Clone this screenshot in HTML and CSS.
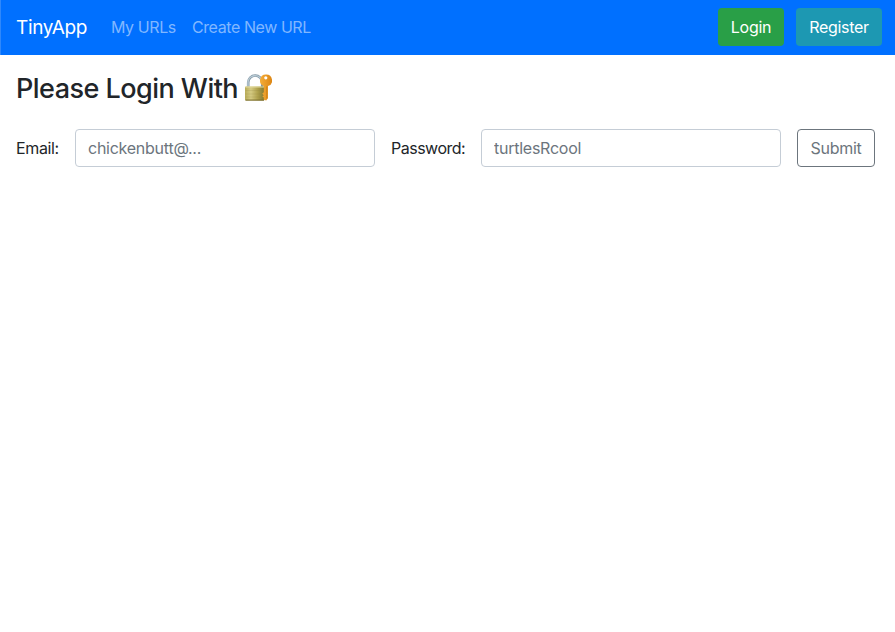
FILE: index.html
```html
<!DOCTYPE html>
<html lang="en">
<head>
<meta charset="utf-8">
<title>TinyApp</title>
<link rel="stylesheet" href="styles.css">
</head>
<body>
<nav class="navbar">
  <a class="brand">TinyApp</a>
  <a class="nav-link urls">My URLs</a>
  <a class="nav-link create">Create New URL</a>
  <div class="actions">
    <button class="btn login" type="button">Login</button>
    <button class="btn register" type="button">Register</button>
  </div>
</nav>
<main>
  <h3 class="title"><span class="title-text">Please Login With</span>
    <svg class="lock" viewBox="0 0 28 28" aria-hidden="true">
      <defs>
        <linearGradient id="body" x2="1"><stop offset="0" stop-color="#b9ac58"/><stop offset=".3" stop-color="#d5cb83"/><stop offset=".65" stop-color="#b0a24d"/><stop offset="1" stop-color="#81772f"/></linearGradient>
        <linearGradient id="key" x2="1"><stop offset="0" stop-color="#f5ad39"/><stop offset="1" stop-color="#dc8615"/></linearGradient>
      </defs>
      <path d="M4.2 14V8.5a7 7 0 0 1 14 0V14" fill="none" stroke="#8296a4" stroke-width="2.6"/>
      <path d="M4 14V8.5a7 7 0 0 1 13.5-2.5" fill="none" stroke="#b9cbd5" stroke-width="1.4"/>
      <rect x="1" y="12.5" width="19.5" height="14" rx="1" fill="url(#body)"/>
      <path d="M1.5 13h18.5" stroke="#e4dc9f"/>
      <path d="M1.5 16.5h18.5M1.5 20h18.5M1.5 23h18.5" stroke="#8d8240" stroke-width=".6" opacity=".3"/>
      <path d="M1.5 26.1h18.5" stroke="#776b2d"/>
      <path fill="url(#key)" fill-rule="evenodd" d="M21.8.6a5.9 5.9 0 0 1 2.2 11.5v12.1l-1.8 2.4-2.4-.8v-2.2l-1.5-1 1.5-1.4-1.6-1.5 1.6-1.4v-6.3A5.9 5.9 0 0 1 21.8.6zm0 1.6a1.6 1.6 0 1 0 0 3.2 1.6 1.6 0 0 0 0-3.2z"/>
      <path d="M22.7 12.4v12.2" stroke="#b96e0c" stroke-width=".5"/>
    </svg>
  </h3>
  <form class="form">
    <label class="label email" for="email">Email:</label>
    <input class="input email-input" id="email" type="email" placeholder="chickenbutt@...">
    <label class="label password" for="password">Password:</label>
    <input class="input password-input" id="password" type="text" placeholder="turtlesRcool">
    <button class="btn submit" type="button">Submit</button>
  </form>
</main>
</body>
</html>
```
FILE: styles.css
```css
* { box-sizing: border-box; }
body {
  margin: 0;
  background: #fff;
  color: #212529;
  font: 400 16px/24px Inter, "Liberation Sans", sans-serif;
  white-space: nowrap;
}
.navbar {
  display: flex;
  align-items: center;
  height: 55px;
  padding: 0 13px 1px 15px;
  background: #0070ff;
  border-left: 1px solid #2f88fb;
}
.brand {
  width: 72px;
  margin-right: 23px;
  padding-top: 2px;
  color: #fff;
  font-size: 19px;
  line-height: 30px;
  letter-spacing: -.35px;
}
.nav-link { color: #80b7ff; letter-spacing: -.42px; }
.urls { width: 65px; margin-right: 16px; }
.actions { display: flex; gap: 12px; margin-left: auto; }
.btn {
  height: 38px;
  padding: 0;
  border: 1px solid transparent;
  border-radius: 4px;
  color: #fff;
  font: inherit;
  letter-spacing: -.3px;
}
.login { width: 66px; background: #299f47; }
.register { width: 86px; background: #1d98b2; }
main { padding: 16px 16px 0; }
.title {
  display: flex;
  align-items: center;
  height: 34px;
  margin: 0 0 24px;
  font-size: 27px;
  font-weight: 500;
  line-height: 34px;
  letter-spacing: -.53px;
}
.title-text { width: 228px; padding-top: 2px; }
.lock { width: 28px; height: 28px; }
.form { display: flex; align-items: center; gap: 16px; }
.label { letter-spacing: -.5px; }
.email { width: 43px; letter-spacing: -.35px; }
.password { width: 74px; }
.input {
  width: 300px;
  height: 38px;
  padding: 6px 12px;
  border: 1px solid #c5cdd6;
  border-radius: 4px;
  font: inherit;
  letter-spacing: -.25px;
}
.input::placeholder { color: #6c757d; opacity: 1; }
.submit { width: 78px; border-color: #6c757d; background: #fff; color: #6c757d; }
```
